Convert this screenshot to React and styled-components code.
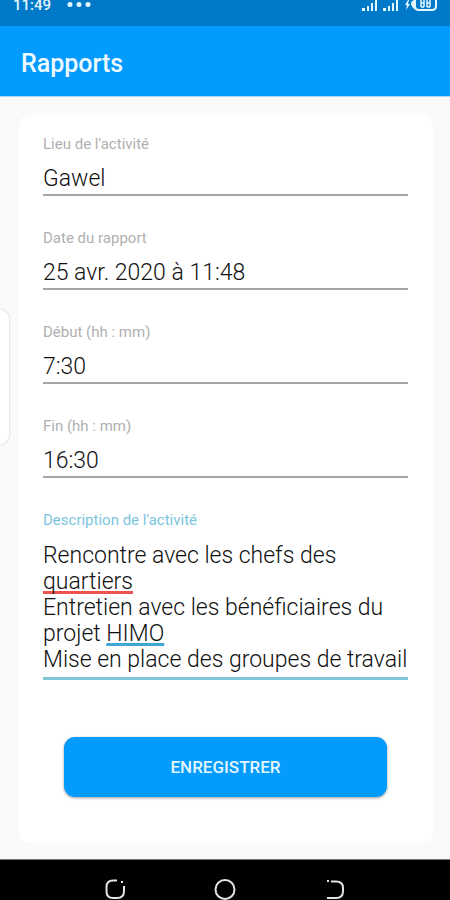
import React, { useState } from "react";
import styled, { createGlobalStyle } from "styled-components";

const GlobalStyle = createGlobalStyle`
  *, *::before, *::after { box-sizing: border-box; }
  body {
    margin: 0;
    background: #fafafa;
    font-family: Roboto, "Liberation Sans", sans-serif;
  }
`;

const Screen = styled.div`
  position: relative;
  display: flex;
  flex-direction: column;
  min-height: 100vh;
  overflow: hidden;
`;

const StatusBar = styled.div`
  display: flex;
  justify-content: space-between;
  height: 26px;
  padding: 0 12px 0 13px;
  background: #0079c8;
  color: #e2f6fd;
`;

const StatusGroup = styled.div`
  display: flex;
  align-items: flex-start;
  gap: ${(p) => p.$gap}px;
`;

const Clock = styled.span`
  font-size: 15px;
  font-weight: 500;
  line-height: 10px;
`;

const AppBar = styled.header`
  display: flex;
  align-items: center;
  height: 70px;
  padding: 6px 21px 0;
  background: #039bfe;
`;

const Title = styled.h1`
  margin: 0;
  color: #effaff;
  font-size: 25px;
  font-weight: 500;
  line-height: 32px;
`;

const Main = styled.main`
  flex: 1;
  display: flex;
  flex-direction: column;
  padding: 18px 17px 16px 19px;
  border-top: 1px solid #a9d7f4;
`;

const Card = styled.form`
  flex: 1;
  display: flex;
  flex-direction: column;
  gap: 32px;
  padding: 19px 25px 46px 24px;
  border-radius: 10px;
  background: #fff;
`;

const Field = styled.div`
  display: flex;
  flex-direction: column;
`;

const Label = styled.label`
  color: ${(p) => (p.$active ? "#7cc4de" : "#b0b0b0")};
  font-size: 15px;
  line-height: 20px;
`;

const TextInput = styled.input`
  width: 100%;
  height: 42px;
  padding: 8px 0 0;
  border: 0;
  border-bottom: 2px solid #a6a6a6;
  border-radius: 0;
  outline: 0;
  background: transparent;
  color: #111;
  font: inherit;
  font-size: 23px;
  font-weight: 300;
`;

const Editor = styled.div`
  display: grid;
  padding: 13px 0 4px;
  border-bottom: 3px solid #80c4d8;
  font-size: 23px;
  font-weight: 300;
  line-height: 26px;
`;

const Marks = styled.div`
  grid-area: 1 / 1;
  color: transparent;
  white-space: pre-wrap;
  overflow-wrap: break-word;
`;

const Mark = styled.span`
  text-decoration: underline 3px ${(p) => p.$color};
  text-decoration-skip-ink: none;
  text-underline-offset: 2px;
`;

const TextArea = styled.textarea`
  grid-area: 1 / 1;
  z-index: 1;
  width: 100%;
  height: 100%;
  padding: 0;
  border: 0;
  outline: 0;
  resize: none;
  overflow: hidden;
  background: transparent;
  color: #111;
  font: inherit;
`;

const SaveButton = styled.button`
  height: 60px;
  margin: 25px 21px 0;
  border: 0;
  border-radius: 11px;
  background: #039bfe;
  box-shadow: 0 1px 3px rgba(0, 0, 0, 0.4);
  color: #e2f6fd;
  font: inherit;
  font-size: 17px;
  font-weight: 500;
  cursor: pointer;
`;

const EdgeHandle = styled.div`
  position: absolute;
  top: 310px;
  left: 0;
  width: 9px;
  height: 134px;
  border-radius: 0 10px 10px 0;
  background: #fff;
  box-shadow: 0 0 3px rgba(0, 0, 0, 0.2);
`;

const NavBar = styled.nav`
  display: flex;
  justify-content: center;
  gap: 86px;
  height: 41px;
  padding-top: 17px;
  border-top: 1px solid #777;
  background: #000;
`;

const NavButton = styled.button`
  width: 24px;
  height: 24px;
  padding: 0;
  border: 0;
  background: none;
  color: #e4e4e4;
`;

const MARK_COLORS = { quartiers: "#ee5350", HIMO: "#3fa6d6" };

const NAV_ITEMS = [
  {
    label: "Applications récentes",
    drawing: (
      <>
        <path d="M14 3.500H10Q3.500 3.500 3.500 10V14Q3.500 21 10 21H14Q21 21 21 14V9" />
        <path d="M18 4H20V6H18Z" fill="currentColor" stroke="none" />
      </>
    ),
  },
  { label: "Accueil", drawing: <circle cx="12" cy="12.500" r="9.5" /> },
  {
    label: "Retour",
    drawing: (
      <>
        <path d="M8 4.500H13Q20 4.500 20 11V14Q20 21 13 21H4" />
        <path d="M4 3H6V5H4Z" fill="currentColor" stroke="none" />
      </>
    ),
  },
];

function Signal() {
  return (
    <svg width="16" height="12" viewBox="0 0 16 12" fill="currentColor" aria-hidden="true">
      <path d="M0 8h3v3H0zM5 6h2v5H5zM9 3h2v8H9zM13 0h2v11h-2z" />
    </svg>
  );
}

function Battery() {
  return (
    <svg width="34" height="12" viewBox="0 0 34 12" fill="none" aria-hidden="true">
      <path d="M4 0L1 5H3L2 10L6 4H4L5 0Z" fill="currentColor" />
      <path d="M10 0Q7 1 7 4Q8 8 12 10V0Z" fill="currentColor" />
      <path d="M11 0V6Q11 10 15 10H28Q32 10 32 6V0" stroke="currentColor" strokeWidth="2" />
      <path d="M17 0V7M20 0V7M23 0V7M26 0V7M17 3H20M23 3H26M17 7H20M23 7H26" stroke="currentColor" strokeWidth="1.500" />
    </svg>
  );
}

function InputField({ id, label, initial }) {
  const [value, setValue] = useState(initial);
  return (
    <Field>
      <Label htmlFor={id}>{label}</Label>
      <TextInput id={id} value={value} onChange={(e) => setValue(e.target.value)} />
    </Field>
  );
}

function DescriptionField() {
  const [value, setValue] = useState(
    "Rencontre avec les chefs des quartiers\nEntretien avec les bénéficiaires du projet HIMO\nMise en place des groupes de travail"
  );
  return (
    <Field>
      <Label htmlFor="description" $active>
        Description de l'activité
      </Label>
      <Editor>
        <Marks aria-hidden="true">
          {value.split(/(\s+)/).map((word, i) =>
            MARK_COLORS[word] ? (
              <Mark key={i} $color={MARK_COLORS[word]}>
                {word}
              </Mark>
            ) : (
              word
            )
          )}
        </Marks>
        <TextArea
          id="description"
          rows={1}
          spellCheck={false}
          value={value}
          onChange={(e) => setValue(e.target.value)}
        />
      </Editor>
    </Field>
  );
}

export default function App() {
  return (
    <>
      <GlobalStyle />
      <Screen>
        <StatusBar>
          <StatusGroup $gap={16}>
            <Clock>11:49</Clock>
            <svg width="24" height="10" viewBox="0 0 24 10" fill="currentColor" aria-hidden="true">
              <circle cx="3" cy="4.500" r="2.500" />
              <circle cx="12" cy="4.500" r="2.500" />
              <circle cx="21" cy="4.500" r="2.500" />
            </svg>
          </StatusGroup>
          <StatusGroup $gap={5}>
            <Signal />
            <Signal />
            <Battery />
          </StatusGroup>
        </StatusBar>
        <AppBar>
          <Title>Rapports</Title>
        </AppBar>
        <Main>
          <Card onSubmit={(e) => e.preventDefault()}>
            <InputField id="place" label="Lieu de l'activité" initial="Gawel" />
            <InputField id="date" label="Date du rapport" initial="25 avr. 2020 à 11:48" />
            <InputField id="start" label="Début (hh : mm)" initial="7:30" />
            <InputField id="end" label="Fin (hh : mm)" initial="16:30" />
            <DescriptionField />
            <SaveButton type="submit">ENREGISTRER</SaveButton>
          </Card>
        </Main>
        <NavBar>
          {NAV_ITEMS.map(({ label, drawing }) => (
            <NavButton key={label} type="button" aria-label={label}>
              <svg width="24" height="24" viewBox="0 0 24 24" fill="none" stroke="currentColor" strokeWidth="2" aria-hidden="true">
                {drawing}
              </svg>
            </NavButton>
          ))}
        </NavBar>
        <EdgeHandle />
      </Screen>
    </>
  );
}
